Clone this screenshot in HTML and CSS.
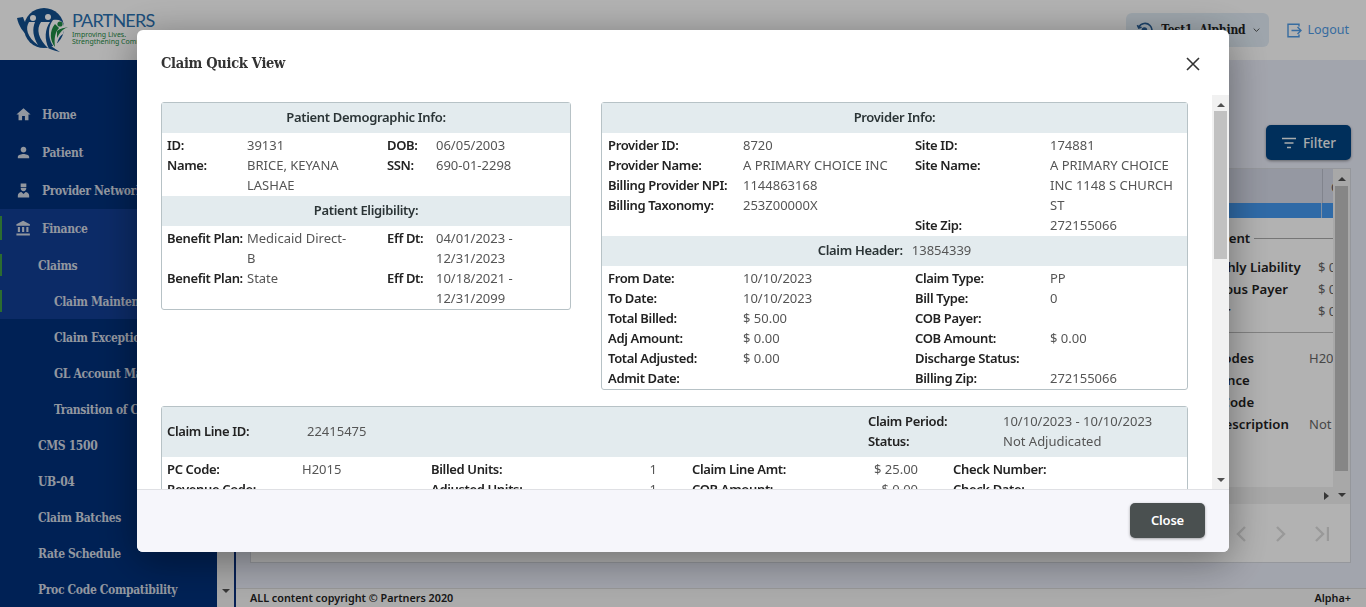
FILE: index.html
```html
<!DOCTYPE html>
<html lang="en">
<head>
    <meta charset="UTF-8">
    <meta name="viewport" content="width=device-width, initial-scale=1.0">
    <title>Claim Quick View</title>
    <link rel="stylesheet" href="styles.css">
</head>
<body>
    <header class="topbar">
        <div class="logo">
            <svg class="logo-mark" width="50" height="46" viewBox="0 0 50 46">
                <circle cx="28" cy="21" r="20" fill="#12508f"/>
                <path d="M1 11 C4 26 18 38 44 45 C28 34 12 26 7 10 Z" fill="#12508f"/>
                <circle cx="17" cy="11" r="3" fill="#fff"/>
                <path d="M13 15 C9 21 11 30 22 38 C17 30 16 22 19 15 Z" fill="#fff"/>
                <circle cx="32" cy="10" r="3" fill="#fff"/>
                <path d="M25 15 C20 22 22 32 33 42 C28 32 29 22 34 15 Z" fill="#fff"/>
                <path d="M37 13 C48 11 50 20 47 27 C42 30 41 36 40 42 C33 36 30 22 37 13 Z" fill="#fff"/>
                <circle cx="44" cy="17" r="2.6" fill="#1d8a44"/>
                <path d="M39 17 C33 24 34 34 39 40 C38 32 39 25 43 21 Z" fill="#1d8a44"/>
                <path d="M41 24 C45 21 48 21 52 20 C47 22 44 25 41 31 Z" fill="#1d8a44"/>
            </svg>
            <div class="logo-text">
                <div class="logo-name">PARTNERS</div>
                <div class="logo-tag">Improving Lives.</div>
                <div class="logo-tag">Strengthening Communities.</div>
            </div>
        </div>
        <div class="user-chip">
            <svg width="24" height="24" viewBox="0 0 24 24" fill="none" stroke="#2a5f96" stroke-width="2.4">
                <path d="M4 8 A10 10 0 1 1 3 14"/>
                <path d="M2 5 L4 9 L8 8"/>
                <circle cx="12" cy="12" r="4" fill="#2a5f96" stroke="none"/>
            </svg>
            <span class="user-name">Test1, Alphind</span>
            <svg width="10" height="6" viewBox="0 0 10 6" fill="none" stroke="#444" stroke-width="1.3"><path d="M1 1 L5 5 L9 1"/></svg>
        </div>
        <a class="logout">
            <svg width="15" height="15" viewBox="0 0 15 15" fill="none" stroke="#4f9be6" stroke-width="1.4">
                <path d="M12 3.5 V1.2 H1 V13.8 H12 V11.5"/>
                <path d="M4.5 7.5 H14 M10.5 4 L14 7.5 L10.5 11"/>
            </svg>
            Logout
        </a>
    </header>

    <div class="app">
        <aside class="sidebar">
            <nav class="nav">
                <div class="nav-item">
                    <svg class="nav-icon" viewBox="0 0 24 24"><path d="M10 20v-6h4v6h5v-8h3L12 3 2 12h3v8z"/></svg>
                    Home
                </div>
                <div class="nav-item">
                    <svg class="nav-icon" viewBox="0 0 24 24"><path d="M12 12c2.210 0 4-1.790 4-4s-1.790-4-4-4-4 1.790-4 4 1.790 4 4 4zm0 2c-2.670 0-8 1.340-8 4v2h16v-2c0-2.660-5.330-4-8-4z"/></svg>
                    Patient
                </div>
                <div class="nav-item">
                    <svg class="nav-icon" viewBox="0 0 24 24"><path d="M8 2h8v5H8zM8 8h8c0 3-1.500 5-4 5s-4-2-4-5zM4 22v-3c0-3 3-5 5-5l3 3 3-3c2 0 5 2 5 5v3z"/></svg>
                    Provider Network
                </div>
                <div class="nav-group">
                    <div class="nav-item marked">
                        <svg class="nav-icon" viewBox="0 0 24 24"><path d="M4 10v7h3v-7H4zm6 0v7h3v-7h-3zM2 22h19v-3H2v3zm14-12v7h3v-7h-3zm-4.500-9L2 6v2h19V6l-9.500-5z"/></svg>
                        Finance
                    </div>
                    <div class="nav-sub marked">Claims</div>
                    <div class="nav-sub deep marked">Claim Maintenance</div>
                </div>
                <div class="nav-sub deep">Claim Exceptions</div>
                <div class="nav-sub deep">GL Account Mapping</div>
                <div class="nav-sub deep">Transition of Care</div>
                <div class="nav-sub">CMS 1500</div>
                <div class="nav-sub">UB-04</div>
                <div class="nav-sub">Claim Batches</div>
                <div class="nav-sub">Rate Schedule</div>
                <div class="nav-sub">Proc Code Compatibility</div>
            </nav>
            <div class="scrollbar side-scroll">
                <span class="arrow-down"></span>
            </div>
        </aside>

        <main class="main">
            <div class="page">
                <div class="filter-row">
                    <button class="btn-filter" type="button">
                        <svg width="16" height="12" viewBox="0 0 16 12" fill="none" stroke="#f4f6f8" stroke-width="1.600"><path d="M1 1.500 H15 M3.500 6 H12.500 M6 10.500 H10"/></svg>
                        Filter
                    </button>
                </div>
                <section class="panel">
                    <div class="panel-top">
                        <div class="panel-main">
                            <div class="panel-view">
                                <div class="grid-head"><span class="grid-col">C</span></div>
                                <div class="grid-row"></div>
                                <div class="detail">
                                    <div class="detail-title"><b>Payment</b><i></i></div>
                                    <div class="detail-rows">
                                        <div class="detail-row"><b>Monthly Liability</b><span>$ 0.00</span></div>
                                        <div class="detail-row"><b>Previous Payer</b><span>$ 0.00</span></div>
                                        <div class="detail-row"><b>Other</b><span>$ 0.00</span></div>
                                    </div>
                                    <div class="detail-rule"></div>
                                    <div class="detail-rows codes">
                                        <div class="detail-row"><b>PC Codes</b><span>H2015</span></div>
                                        <div class="detail-row"><b>Advance</b><span></span></div>
                                        <div class="detail-row"><b>Rev Code</b><span></span></div>
                                        <div class="detail-row"><b>PC Description</b><span>Not</span></div>
                                    </div>
                                </div>
                            </div>
                            <div class="hscroll"><span class="arrow-right"></span></div>
                        </div>
                        <div class="vscroll">
                            <span class="arrow-up"></span>
                            <div class="vscroll-thumb"></div>
                            <span class="arrow-down"></span>
                        </div>
                    </div>
                    <div class="pager">
                        <svg width="12" height="16" viewBox="0 0 12 16" fill="none" stroke="#dcdcdc" stroke-width="2.4"><path d="M10 1 L3 8 L10 15"/></svg>
                        <svg width="12" height="16" viewBox="0 0 12 16" fill="none" stroke="#dcdcdc" stroke-width="2.4"><path d="M2 1 L9 8 L2 15"/></svg>
                        <svg width="14" height="16" viewBox="0 0 14 16" fill="none" stroke="#dcdcdc" stroke-width="2.4"><path d="M1 1 L8 8 L1 15 M13 1 V15"/></svg>
                    </div>
                </section>
            </div>
            <footer class="footer">
                <span>ALL content copyright © Partners 2020</span>
                <span>Alpha+</span>
            </footer>
        </main>
    </div>

    <div class="backdrop">
        <div class="modal">
            <div class="modal-header">
                <h5 class="modal-title">Claim Quick View</h5>
                <svg class="modal-x" width="14" height="14" viewBox="0 0 14 14" fill="none" stroke="#333" stroke-width="1.600"><path d="M1 1 L13 13 M13 1 L1 13"/></svg>
            </div>
            <div class="modal-body">
                <div class="modal-scroll">
                    <div class="cards">
                        <div class="card card-left">
                            <div class="band">Patient Demographic Info:</div>
                            <div class="rows four-left">
                                <b>ID:</b><span>39131</span><b>DOB:</b><span>06/05/2003</span>
                                <b>Name:</b><span>BRICE, KEYANA LASHAE</span><b>SSN:</b><span>690-01-2298</span>
                            </div>
                            <div class="band">Patient Eligibility:</div>
                            <div class="rows four-left">
                                <b>Benefit Plan:</b><span>Medicaid Direct-B</span><b>Eff Dt:</b><span>04/01/2023 - 12/31/2023</span>
                                <b>Benefit Plan:</b><span>State</span><b>Eff Dt:</b><span>10/18/2021 - 12/31/2099</span>
                            </div>
                        </div>
                        <div class="card card-right">
                            <div class="band">Provider Info:</div>
                            <div class="split">
                                <div class="rows two-right">
                                    <b>Provider ID:</b><span>8720</span>
                                    <b>Provider Name:</b><span>A PRIMARY CHOICE INC</span>
                                    <b>Billing Provider NPI:</b><span>1144863168</span>
                                    <b>Billing Taxonomy:</b><span>253Z00000X</span>
                                </div>
                                <div class="rows two-right">
                                    <b>Site ID:</b><span>174881</span>
                                    <b>Site Name:</b><span>A PRIMARY CHOICE INC 1148 S CHURCH ST</span>
                                    <b>Site Zip:</b><span>272155066</span>
                                </div>
                            </div>
                            <div class="band">Claim Header: <span class="band-value">13854339</span></div>
                            <div class="split">
                                <div class="rows two-right">
                                    <b>From Date:</b><span>10/10/2023</span>
                                    <b>To Date:</b><span>10/10/2023</span>
                                    <b>Total Billed:</b><span>$ 50.00</span>
                                    <b>Adj Amount:</b><span>$ 0.00</span>
                                    <b>Total Adjusted:</b><span>$ 0.00</span>
                                    <b>Admit Date:</b><span></span>
                                </div>
                                <div class="rows two-right">
                                    <b>Claim Type:</b><span>PP</span>
                                    <b>Bill Type:</b><span>0</span>
                                    <b>COB Payer:</b><span></span>
                                    <b>COB Amount:</b><span>$ 0.00</span>
                                    <b>Discharge Status:</b><span></span>
                                    <b>Billing Zip:</b><span>272155066</span>
                                </div>
                            </div>
                        </div>
                    </div>
                    <div class="card card-line">
                        <div class="line-head">
                            <div class="line-id"><b>Claim Line ID:</b><span>22415475</span></div>
                            <div class="line-period">
                                <b>Claim Period:</b><span>10/10/2023 - 10/10/2023</span>
                                <b>Status:</b><span>Not Adjudicated</span>
                            </div>
                        </div>
                        <div class="rows line-rows">
                            <b>PC Code:</b><span>H2015</span><b>Billed Units:</b><span class="num">1</span><b>Claim Line Amt:</b><span class="num">$ 25.00</span><b>Check Number:</b>
                            <b>Revenue Code:</b><span></span><b>Adjusted Units:</b><span class="num">1</span><b>COB Amount:</b><span class="num">$ 0.00</span><b>Check Date:</b>
                        </div>
                    </div>
                </div>
                <div class="vscroll modal-bar">
                    <span class="arrow-up"></span>
                    <div class="vscroll-thumb"></div>
                    <span class="arrow-down"></span>
                </div>
            </div>
            <div class="modal-footer">
                <button class="btn-close" type="button">Close</button>
            </div>
        </div>
    </div>
</body>
</html>
```

FILE: styles.css
```css
* {
    box-sizing: border-box;
}

html, body {
    height: 100%;
}

body {
    margin: 0;
    overflow: hidden;
    font-family: "Noto Sans", Arial, sans-serif;
    font-size: 13px;
    line-height: 20px;
    color: #555;
    background-color: #e9ecf8;
}

/* top bar */
.topbar {
    display: flex;
    align-items: center;
    height: 60px;
    padding: 0 17px 0 16px;
    background-color: #fff;
}

.logo {
    display: flex;
    align-items: flex-start;
    gap: 6px;
    align-self: flex-start;
    margin-right: auto;
    padding-top: 9px;
}

.logo-mark {
    margin-top: -2px;
    overflow: visible;
}

.logo-name {
    font-family: Lato, "Liberation Sans", sans-serif;
    font-size: 18px;
    line-height: 22px;
    letter-spacing: -0.8px;
    color: #2a70b0;
}

.logo-tag {
    font-size: 7px;
    line-height: 7px;
    color: #1d8a44;
    white-space: nowrap;
}

.user-chip {
    display: flex;
    align-items: center;
    gap: 8px;
    width: 143px;
    height: 34px;
    padding: 0 9px 0 10px;
    border-radius: 6px;
    background-color: #e2edf6;
}

.user-name {
    font-family: "DejaVu Serif Condensed", "Liberation Serif", serif;
    font-weight: bold;
    font-size: 12px;
    letter-spacing: -0.2px;
    color: #222;
    white-space: nowrap;
}

.logout {
    display: flex;
    align-items: center;
    gap: 5px;
    margin-left: 18px;
    font-size: 12.5px;
    color: #4f9be6;
}

/* page frame */
.app {
    display: flex;
    height: calc(100vh - 60px);
}

.sidebar {
    display: flex;
    flex: 0 0 236px;
    overflow: hidden;
    border-right: 2px solid #0a2f7a;
    background-color: #f1f1f1;
}

.nav {
    flex: 0 0 217px;
    padding-top: 35px;
    height: 100%;
    overflow: hidden;
    background-color: #00307a;
}

.nav-item, .nav-sub {
    display: flex;
    align-items: center;
    padding-top: 2px;
    white-space: nowrap;
    font-family: "DejaVu Serif Condensed", "Liberation Serif", serif;
    font-weight: bold;
    font-size: 12px;
    letter-spacing: -0.35px;
    color: #d2d9e4;
}

.nav-item {
    gap: 10px;
    height: 38px;
    padding-left: 15px;
}

.nav-sub {
    height: 36px;
    padding-left: 38px;
}

.nav-sub.deep {
    padding-left: 54px;
}

.nav-icon {
    width: 17px;
    height: 17px;
    margin-top: -2px;
    fill: #d2d9e4;
}

.nav-group {
    height: 110px;
    background-color: #123e94;
}

.marked {
    position: relative;
}

.marked::before {
    content: "";
    position: absolute;
    left: 0;
    top: 7px;
    bottom: 7px;
    width: 2px;
    background-color: #3f9d46;
}

.scrollbar {
    position: relative;
    flex: 0 0 17px;
}

.side-scroll .arrow-down {
    position: absolute;
    left: 5px;
    bottom: 7px;
}

.main {
    display: flex;
    flex-direction: column;
    flex: 1;
    min-width: 0;
}

.page {
    flex: 1;
    padding: 65px 15px 0 14px;
}

.filter-row {
    display: flex;
    justify-content: flex-end;
    margin-bottom: 8px;
}

.btn-filter {
    display: flex;
    align-items: center;
    justify-content: center;
    gap: 6px;
    width: 85px;
    height: 35px;
    padding: 0;
    border: none;
    border-radius: 5px;
    font-family: inherit;
    font-size: 13.5px;
    font-weight: 500;
    color: #f4f6f8;
    background-color: #004483;
    box-shadow: 0 1px 3px rgba(0, 0, 0, 0.4);
}

.panel {
    height: 395px;
    border: 1px solid #d6d9e0;
    background-color: #fff;
}

.panel-top {
    display: flex;
    height: 335px;
}

.panel-main {
    display: flex;
    flex-direction: column;
    flex: 1;
    min-width: 0;
}

.panel-view {
    flex: 1;
    overflow: hidden;
}

.grid-head {
    display: flex;
    justify-content: flex-end;
    height: 34px;
    background-color: #d6dae8;
}

.grid-col {
    width: 11px;
    padding: 8px 0 0 8px;
    overflow: hidden;
    color: #555;
    border-left: 1px solid #b9bdca;
}

.grid-row {
    display: flex;
    justify-content: flex-end;
    height: 15px;
    background-color: #4499f0;
}

.grid-row::after {
    content: "";
    width: 11px;
    border-left: 1px solid #b9cfe8;
}

.detail {
    margin-left: 942px;
    padding-top: 10px;
    white-space: nowrap;
    color: #222;
}

.detail b {
    font-size: 13.2px;
    font-weight: 600;
}

.detail-title {
    display: flex;
    align-items: center;
    gap: 4px;
    height: 20px;
    margin-bottom: 8px;
}

.detail-title i {
    flex: 1;
    height: 1px;
    background-color: #aaa;
}

.detail-row {
    display: grid;
    grid-template-columns: 125px 15px;
    overflow: hidden;
    line-height: 22px;
}

.detail-row span {
    color: #666;
}

.detail-rule {
    height: 1px;
    margin: 10px 0 14px;
    background-color: #bbb;
}

.codes .detail-row {
    grid-template-columns: 114px 24px;
    padding-left: 2px;
}

.hscroll {
    position: relative;
    height: 17px;
    background-color: #f1f1f1;
}

.arrow-right {
    position: absolute;
    right: 4px;
    top: 5px;
    border-left: 5px solid #505050;
    border-top: 4px solid transparent;
    border-bottom: 4px solid transparent;
}

.vscroll {
    display: flex;
    flex-direction: column;
    align-items: center;
    flex: 0 0 17px;
    background-color: #f1f1f1;
}

.vscroll-thumb {
    flex: 0 0 auto;
    width: 13px;
    height: 285px;
    margin: 5px 0;
    background-color: #c1c1c1;
}

.arrow-up, .arrow-down {
    display: block;
    flex: none;
    border-left: 4px solid transparent;
    border-right: 4px solid transparent;
}

.arrow-up {
    margin-top: 8px;
    border-bottom: 4px solid #505050;
}

.arrow-down {
    margin-top: auto;
    margin-bottom: 7px;
    border-top: 4px solid #505050;
}

.pager {
    display: flex;
    justify-content: flex-end;
    align-items: center;
    gap: 28px;
    height: 59px;
    padding-right: 21px;
}

.footer {
    display: flex;
    justify-content: space-between;
    align-items: center;
    height: 19px;
    padding: 0 15px 0 14px;
    border-top: 1px solid #d8d8d8;
    font-size: 10.8px;
    font-weight: 600;
    color: #222;
    background-color: #f5f5f5;
}

/* modal */
.backdrop {
    position: fixed;
    inset: 0;
    display: flex;
    justify-content: center;
    align-items: flex-start;
    padding-top: 30px;
    background-color: rgba(0, 0, 0, 0.3);
}

.modal {
    display: flex;
    flex-direction: column;
    width: 1092px;
    height: 522px;
    border-radius: 6px;
    overflow: hidden;
    background-color: #fff;
    box-shadow: 0 8px 40px rgba(0, 0, 0, 0.4);
}

.modal-header {
    display: flex;
    justify-content: space-between;
    align-items: center;
    flex: 0 0 65px;
    padding: 0 29px 0 24px;
}

.modal-title {
    margin: 0;
    font-family: "DejaVu Serif Condensed", "Liberation Serif", serif;
    font-size: 14.5px;
    font-weight: bold;
    letter-spacing: -0.3px;
    color: #333;
}

.modal-x {
    margin-top: 3px;
}

.modal-body {
    display: flex;
    flex: 0 0 394px;
    overflow: hidden;
}

.modal-scroll {
    flex: 1;
    padding: 7px 24px 0;
    overflow: hidden;
}

.modal-bar .vscroll-thumb {
    height: 148px;
    margin: 4px 0 0;
}

.modal-footer {
    display: flex;
    justify-content: flex-end;
    align-items: center;
    flex: 1;
    padding: 0 24px 1px 0;
    border-top: 1px solid #dfe0e4;
    background-color: #f6f6fb;
}

.btn-close {
    width: 75px;
    height: 35px;
    padding: 0 0 2px;
    border: none;
    border-radius: 5px;
    font-family: inherit;
    font-size: 13px;
    font-weight: 600;
    letter-spacing: -0.2px;
    color: #fff;
    background-color: #4a5050;
    box-shadow: 0 1px 3px rgba(0, 0, 0, 0.35);
}

.cards {
    display: flex;
    align-items: flex-start;
    gap: 30px;
    margin-bottom: 16px;
}

.card {
    border: 1px solid #b7c2c6;
    border-radius: 3px;
}

.card-left {
    flex: 0 0 410px;
}

.card-right {
    flex: 1;
}

.band {
    height: 30px;
    line-height: 28px;
    text-align: center;
    font-weight: 600;
    letter-spacing: -0.32px;
    color: #2b3436;
    background-color: #e3ebee;
}

.band-value {
    margin-left: 6px;
    font-weight: 400;
    letter-spacing: 0;
    color: #555;
}

.rows {
    display: grid;
    padding: 2px 0 1px 5px;
}

.rows b, .line-head b {
    font-weight: 600;
    letter-spacing: -0.35px;
    color: #222;
    white-space: nowrap;
}

.four-left {
    grid-template-columns: 80px 140px 49px 1fr;
}

.four-left span:nth-child(4n+2) {
    padding-right: 36px;
}

.split {
    display: grid;
    grid-template-columns: 307px 1fr;
}

.two-right {
    grid-template-columns: 135px 1fr;
    align-content: start;
}

.split .rows:first-child {
    padding-left: 6px;
}

.split .rows:last-child {
    padding-left: 6px;
    padding-right: 8px;
}

.line-head {
    display: flex;
    justify-content: space-between;
    align-items: center;
    height: 50px;
    padding: 0 0 2px 5px;
    background-color: #e3ebee;
}

.line-id {
    display: grid;
    grid-template-columns: 140px auto;
}

.line-period {
    display: grid;
    grid-template-columns: 135px 184px;
}

.line-rows {
    grid-template-columns: 135px 129px 100px 161px 100px 161px 1fr;
}

.line-rows .num {
    padding-right: 35px;
    text-align: right;
}
```
